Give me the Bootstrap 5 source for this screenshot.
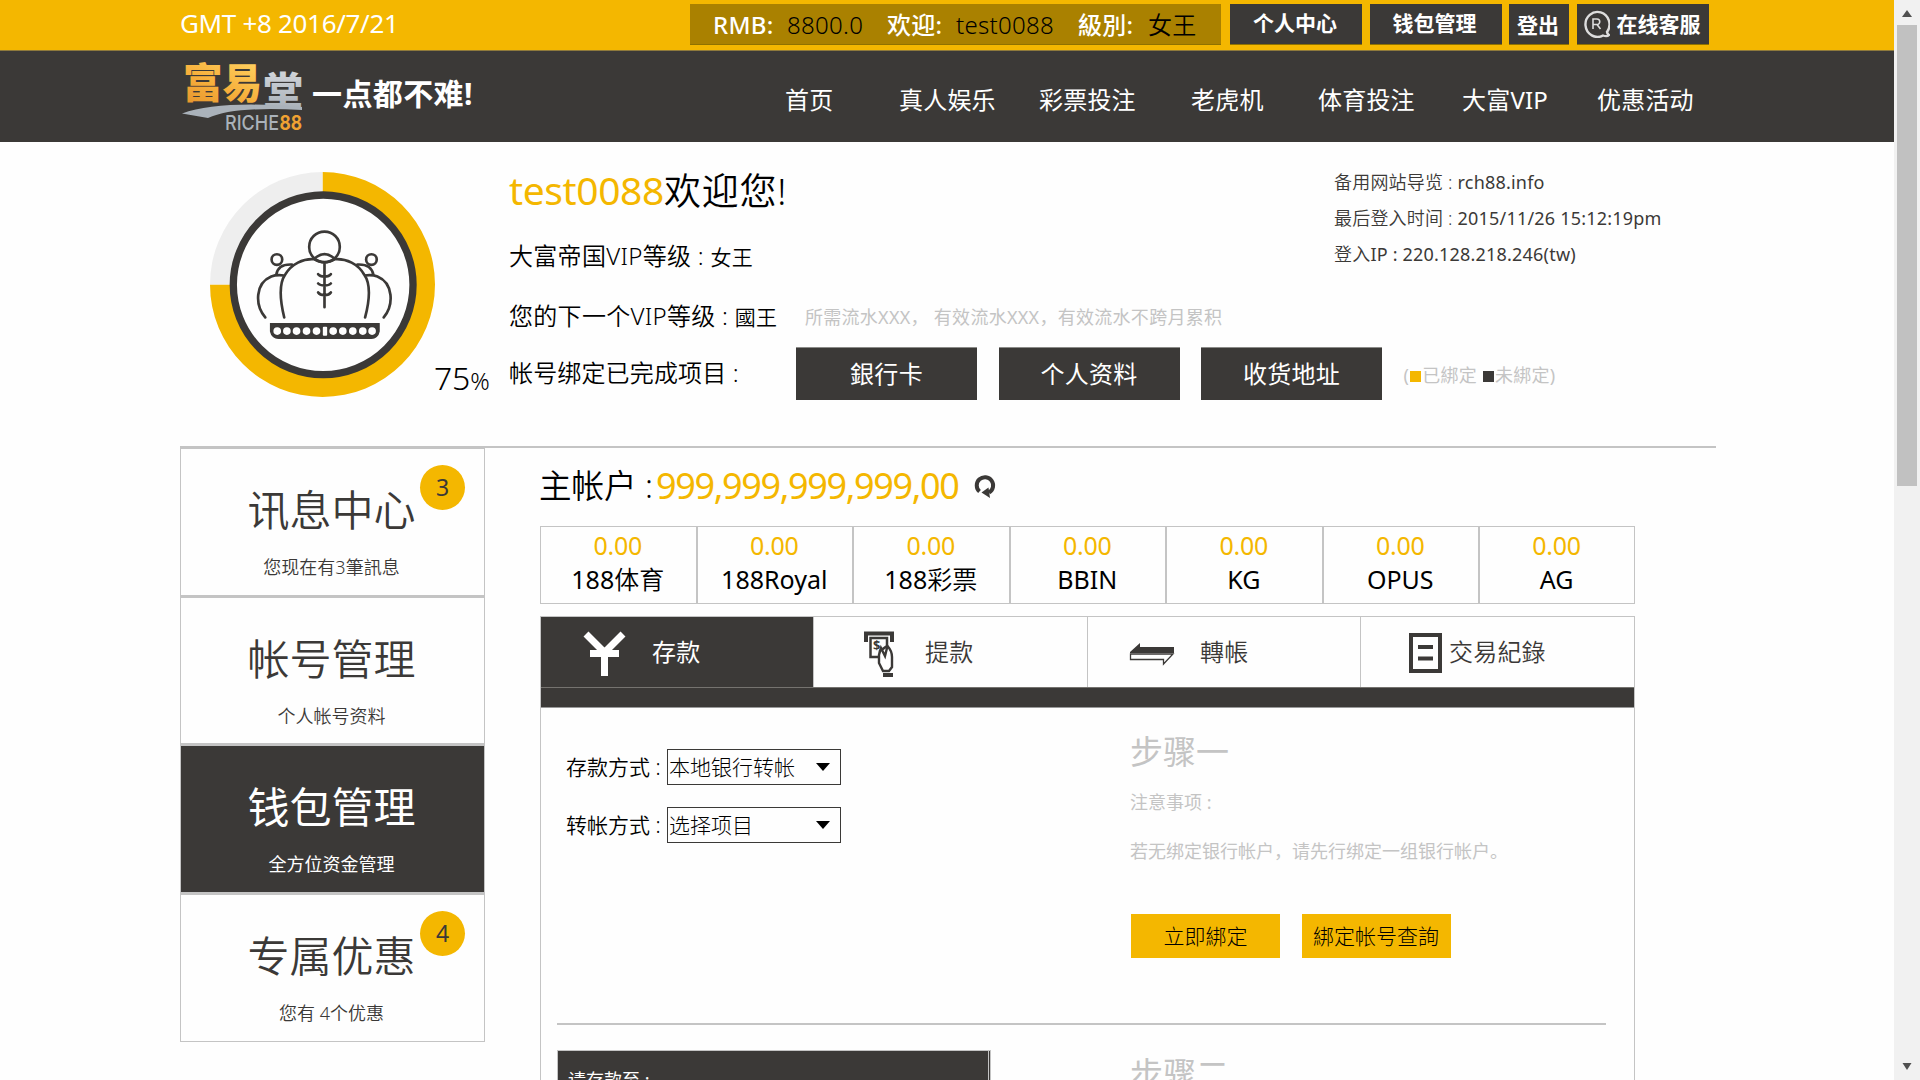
<!DOCTYPE html>
<html lang="zh-CN">
<head>
<meta charset="utf-8">
<title>富易堂 钱包管理</title>
<link href="https://cdn.jsdelivr.net/npm/bootstrap@5.3.0/dist/css/bootstrap.min.css" rel="stylesheet">
<style>
:root{--gold:#f4b700;--ink:#3b3937;--rule:#c4c4c4}
html,body{height:1080px;overflow:hidden}
body{margin:0;background:#fefefe;color:#000;font-family:"Noto Sans","Noto Sans CJK SC",sans-serif;font-size:18px;line-height:1;font-weight:350}
*{white-space:nowrap}
.page{width:1894px;height:1080px;overflow:hidden}
.wrap{width:1536px;margin-left:180px}
.gold{color:var(--gold)}
.topbar{height:51px;background:var(--gold);border-bottom:1px solid #8f7a3c}
.topbar .wrap{padding-top:4px}
.clock{width:510px;height:40px;line-height:39px;font-size:26px;color:#fff;letter-spacing:-.32px;font-weight:400}
.status{width:531px;height:41px;line-height:41px;background:#aa8100;border-bottom:1px solid #8f7200;font-size:24px;letter-spacing:.3px;display:grid;grid-template-columns:74px 100px 69px 122px 70px 1fr;padding-left:23px;margin-right:9px}
.status b{color:#fff;font-weight:500}
.tbtn{height:41px;line-height:39px;background:var(--ink);border-bottom:1px solid #8f7200;color:#fff;font-weight:700;font-size:21px;width:132px;margin-right:7.5px;padding-right:2px;text-align:center;flex-shrink:0}
.tbtn.out{width:60px;line-height:43px}
.tbtn svg{margin-right:7px}
.mainnav{height:91px;background:var(--ink);color:#fff}
.brand{width:605px}
.slogan{font-size:30px;font-weight:700;margin:-5px 0 0 6px;letter-spacing:.4px}
.menu{display:grid;grid-template-columns:114px 140px 152px 127px 144px 135px 1fr;width:930px;font-size:24px;font-weight:400;height:91px;line-height:98px;letter-spacing:.2px}
.profile{height:304px;padding-top:30px}
.ring{width:225px;height:225px;margin-left:30px}
.pct{width:75px;margin:186px 0 0 -1px;font-size:32px;line-height:40px;letter-spacing:-.2px}
.pct span{font-size:24px}
.who{width:824px}
.who .hello{height:44px;line-height:36px;font-size:37px;letter-spacing:.8px}
.who .hello .gold{font-size:39px;letter-spacing:-.4px;font-weight:400}
.line{height:58.5px;line-height:59px;font-size:24px;letter-spacing:.3px}
.line .sm{font-size:21px}
.hint{color:var(--rule);font-size:18px;font-weight:400;margin-top:2px;letter-spacing:.28px}
.bind{width:181px;height:53px;line-height:52px;background:var(--ink);border-top:1px solid #8b8b88;color:#fff;font-size:24px;text-align:center;margin:2.500px 21.5px 0 0;font-weight:400;flex-shrink:0}
.facts{color:var(--ink);font-size:18px;line-height:36px;margin:-8px 0 0 1px;letter-spacing:.2px}
.facts span{font-weight:400}
.sq{display:inline-block;width:11px;height:11px;background:var(--gold);margin:0 1px}
.sq.dk{background:var(--ink)}
.lower{border-top:2px solid var(--rule);height:634px}
.side{width:305px;flex-shrink:0}
.sitem{position:relative;height:148.5px;border:1px solid var(--rule);border-bottom-width:2px;text-align:center;color:var(--ink);padding:36px 2px 0 0}
.sitem:last-child{border-bottom-width:1px}
.sitem .big{font-size:42px;line-height:50px}
.sitem .sub{font-size:18px;line-height:20px;margin-top:22px}
.sitem.on{background:var(--ink);color:#fff}
.sitem.on div{font-weight:400}
.dot{position:absolute;right:19px;top:16px;width:45px;height:45px;border-radius:50%;background:var(--gold);font-size:23px;line-height:44px;font-weight:400}
.content{width:1095px;margin-left:55px}
.acct{height:78px;padding-top:18px;font-size:32.5px;line-height:40px}
.acct .lb1{width:117px;margin-left:-1px}
.acct .gold{font-size:36px;letter-spacing:-1.36px;font-weight:400}
.acct svg{margin:8px 0 0 16px}
.cells{display:grid;grid-template-columns:repeat(6,156.5px) 1fr;height:78px;border:1px solid var(--rule);text-align:center;font-size:25px}
.cells>div{border-right:2px solid var(--rule);padding:1px 1px 0 0;line-height:34px}
.cells>div:last-child{border:0}
.cells .gold{font-weight:400;letter-spacing:-.3px}
.cells .nm{font-size:25px}
.cells .la{font-weight:400}
.tabs4{display:grid;grid-template-columns:273px 274px 273px 1fr;height:71px;border:1px solid var(--rule);border-bottom:0;margin-top:12px;color:var(--ink);font-size:24px;line-height:70px;letter-spacing:.2px}
.tabs4>div{border-right:1.5px solid var(--rule);height:70px}
.tabs4>div:last-child{border:0}
.tabs4 .on{background:var(--ink);color:#fff;font-weight:400}
.panel{border:1px solid var(--rule);border-top:0;height:400px}
.band{height:21px;background:var(--ink);border-top:1px solid #75736f;border-bottom:1px solid #999}
.step{height:317px;border-bottom:2px solid var(--rule);margin:0 28px 0 16px}
.frm{width:573px;padding:41px 0 0 9px}
.frow{height:36px;margin-bottom:22px;font-size:21px}
.frow .lb{width:101px}
.pick{width:174px;height:36px;border:1.5px solid var(--ink);padding:0 10px 0 1px;line-height:34px;font-weight:300}
.note{color:var(--rule);font-weight:400;padding-top:26px}
.note h3{font-size:33px;line-height:36px;margin:0;font-weight:400}
.ybtn{width:149px;height:44px;line-height:44px;background:var(--gold);color:#000;text-align:center;font-size:21px;margin-right:21.5px;font-weight:300}
.paybox{width:434px;height:60px;border:1px solid var(--rule);border-right:3px double var(--rule);background:var(--ink);color:#fff;padding:20px 10px;font-size:18px;font-weight:400}
.sbar{width:26px;height:1080px;background:#f1f1f1}
.thumb{width:20px;height:461px;background:#c1c1c1;margin:0 auto}
</style>
<script src="https://cdn.jsdelivr.net/npm/bootstrap@5.3.0/dist/js/bootstrap.bundle.min.js"></script>
</head>
<body class="d-flex">
<div class="page">
  <header class="topbar"><div class="wrap d-flex">
    <div class="clock">GMT +8 2016/7/21</div>
    <div class="status"><b>RMB:</b><span>8800.0</span><b>欢迎:</b><span>test0088</span><b>級別:</b><span>女王</span></div>
    <div class="tbtn">个人中心</div><div class="tbtn">钱包管理</div><div class="tbtn out">登出</div>
    <div class="tbtn d-flex align-items-center justify-content-center"><svg width="27" height="28" viewBox="0 0 27 28" fill="none" stroke="#ddd" stroke-width="2.400"><path d="M24 22A12 12.500 0 1 0 20 25.500Q24 27 26 25Q24 24 24 21" /><path d="M10 19V9h4a2.700 2.700 0 0 1 0 5.500h-4m4 0 3.500 4.500" stroke-width="1.600"/></svg><span>在线客服</span></div>
  </div></header>
  <nav class="mainnav"><div class="wrap d-flex">
    <div class="brand d-flex align-items-center">
      <svg width="126" height="91" viewBox="0 0 126 91">
        <defs><linearGradient id="lg" x1="0" y1="1" x2=".6" y2="0"><stop offset="0" stop-color="#e2902a"/><stop offset=".5" stop-color="#f7b03c"/><stop offset="1" stop-color="#ffd160"/></linearGradient>
        <linearGradient id="ls" x1="0" y1="0" x2="0" y2="1"><stop offset="0" stop-color="#dde0e4"/><stop offset="1" stop-color="#a3abb3"/></linearGradient></defs>
        <g font-family="Noto Sans CJK SC" font-weight="900"><text x="3" y="47" font-size="41" fill="url(#lg)" textLength="79" lengthAdjust="spacingAndGlyphs">富易</text><text x="83" y="53" font-size="38" fill="url(#ls)" textLength="40" lengthAdjust="spacingAndGlyphs">堂</text></g>
        <path d="M2 62.500Q40 49 122 56V59Q54 55 28 67Z" fill="#aab2ba"/>
        <g font-family="Inter" font-weight="500" font-size="20"><text x="45" y="79" fill="#aab2ba" textLength="54" lengthAdjust="spacingAndGlyphs">RICHE</text><text x="99.500" y="79" fill="#f0a232" font-weight="700" textLength="22.500" lengthAdjust="spacingAndGlyphs">88</text></g>
      </svg>
      <div class="slogan">一点都不难!</div>
    </div>
    <div class="menu"><span>首页</span><span>真人娱乐</span><span>彩票投注</span><span>老虎机</span><span>体育投注</span><span>大富VIP</span><span>优惠活动</span></div>
  </div></nav>

  <section class="wrap profile d-flex">
    <svg class="ring" viewBox="90 66 676 676" fill="none" stroke="#3b3937" stroke-width="8" stroke-linecap="round">
      <path d="M428 404V66A338 338 0 1 1 90 404Z" fill="#f4b700" stroke="none"/>
      <path d="M428 404H90A338 338 0 0 1 428 66Z" fill="#eee" stroke="none"/>
      <circle cx="430" cy="405" r="270" fill="#fefefe" stroke-width="22"/>
      <circle cx="434" cy="291" r="46"/><circle cx="291" cy="329" r="16"/><circle cx="575" cy="329" r="16"/>
      <path d="M313 503C300 450 298 400 316 374C335 342 370 326 402 328Q420 338 434 338Q448 338 466 328C500 326 535 342 553 374C572 400 570 450 556 503M402 328Q434 298 466 328M434 340V472M415 373Q420 380 434 380Q448 380 453 373M415 401Q420 407 434 407Q448 407 453 401M415 428Q420 436 434 436Q448 436 453 428M256 503C224 465 226 400 274 380Q290 374 312 377M612 503C643 465 641 400 593 380Q577 374 555 377M289 375Q294 342 336 344M581 375Q575 342 533 344"/>
      <path d="M272 522H598V545Q594 565 574 566H297Q276 565 272 545Z" fill="#3b3937" stroke-width="4"/>
      <g fill="#fefefe" stroke="none"><circle cx="292" cy="544" r="11.500"/><circle cx="321" cy="544" r="11.500"/><circle cx="350" cy="544" r="11.500"/><circle cx="380" cy="544" r="11.500"/><circle cx="410" cy="544" r="11.500"/><circle cx="460" cy="544" r="11.500"/><circle cx="489" cy="544" r="11.500"/><circle cx="519" cy="544" r="11.500"/><circle cx="549" cy="544" r="11.500"/><circle cx="577" cy="544" r="11.500"/><rect x="429" y="531" width="13" height="27" rx="3"/></g>
    </svg>
    <div class="pct">75<span>%</span></div>
    <div class="who">
      <div class="hello"><span class="gold">test0088</span><span>欢迎您!</span></div>
      <div class="line" style="margin-top:10px"><span>大富帝国VIP等级 : </span><span class="sm">女王</span></div>
      <div class="line d-flex" style="margin-top:1px"><div style="width:296px"><span>您的下一个VIP等级 : </span><span class="sm">國王</span></div><span class="hint">所需流水XXX， 有效流水XXX，有效流水不跨月累积</span></div>
      <div class="line d-flex"><div class="flex-shrink-0" style="width:287px;letter-spacing:.15px;margin-top:-1px">帐号绑定已完成项目 :</div><div class="bind">銀行卡</div><div class="bind">个人资料</div><div class="bind">收货地址</div><span class="hint">(<i class="sq"></i>已綁定 <i class="sq dk"></i>未綁定)</span></div>
    </div>
    <div class="facts"><div>备用网站导览 : <span>rch88.info</span></div><div>最后登入时间 : <span>2015/11/26 15:12:19pm</span></div><div>登入<span>IP : 220.128.218.246(tw)</span></div></div>
  </section>

  <section class="wrap lower d-flex">
    <aside class="side">
      <div class="sitem"><div class="big">讯息中心</div><div class="sub">您现在有3筆訊息</div><span class="dot">3</span></div>
      <div class="sitem"><div class="big">帐号管理</div><div class="sub">个人帐号资料</div></div>
      <div class="sitem on"><div class="big">钱包管理</div><div class="sub">全方位资金管理</div></div>
      <div class="sitem"><div class="big">专属优惠</div><div class="sub">您有 4个优惠</div><span class="dot">4</span></div>
    </aside>
    <main class="content">
      <div class="acct d-flex"><div class="lb1">主帐户 :</div><span class="gold">999,999,999,999,00</span>
        <svg width="22" height="25" viewBox="0 0 22 25" fill="none" stroke="#3b3937" stroke-width="4"><path d="M5.500 17.500A8.200 8.200 0 1 1 15 18.500"/><path d="M7.500 18.500l7-5 1.500 10.500z" fill="#3b3937" stroke="none"/></svg></div>
      <div class="cells">
        <div><div class="gold">0.00</div><div class="nm"><span class="la">188</span>体育</div></div>
        <div><div class="gold">0.00</div><div class="nm la">188Royal</div></div>
        <div><div class="gold">0.00</div><div class="nm"><span class="la">188</span>彩票</div></div>
        <div><div class="gold">0.00</div><div class="nm la">BBIN</div></div>
        <div><div class="gold">0.00</div><div class="nm la">KG</div></div>
        <div><div class="gold">0.00</div><div class="nm la">OPUS</div></div>
        <div><div class="gold">0.00</div><div class="nm la">AG</div></div>
      </div>
      <div class="tabs4">
        <div class="on d-flex"><svg width="43" height="45" viewBox="0 0 43 45" style="margin:14px 26px 0 42px" fill="none" stroke="#fff" stroke-width="7"><path d="M3 3 21.500 21.500 40 3M7 22.500H36M21.500 21V45"/></svg><span>存款</span></div>
        <div class="d-flex"><svg width="30" height="46" viewBox="0 0 30 46" style="margin:14px 31px 0 50px" fill="none" stroke="#3b3937"><path d="M2 11V2.500H28V11" stroke-width="4"/><path d="M6.500 7V26H16V20L23 15V7Z" stroke-width="2.500"/><text x="9" y="19" font-size="13" font-weight="700" fill="#3b3937" stroke="none">$</text><path d="M17 17 21 25 23.500 15Q28 20 28 26V36L25 40H19L15 32V24Z" fill="#fff" stroke-width="2.400"/><path d="M19 44H29" stroke-width="4"/></svg><span>提款</span></div>
        <div class="d-flex"><svg width="46" height="25" viewBox="0 0 46 25" style="margin:25px 25px 0 41px"><path d="M1 10 11 1V5H45V11H1Z" fill="#3b3937"/><path d="M1.500 12H44L34.500 22V17.500H1.500Z" fill="#fff" stroke="#3b3937" stroke-width="1.300"/></svg><span>轉帳</span></div>
        <div class="d-flex"><svg width="33" height="40" viewBox="0 0 33 40" style="margin:16px 7px 0 48px" fill="none" stroke="#3b3937" stroke-width="4"><path d="M2 2H31V38H2ZM9 14H24M9 25.500H24"/></svg><span>交易紀錄</span></div>
      </div>
      <div class="panel">
        <div class="band"></div>
        <div class="step d-flex">
          <div class="frm">
            <div class="frow d-flex align-items-center"><span class="lb">存款方式 :</span><div class="pick d-flex align-items-center"><span class="me-auto">本地银行转帐</span><svg width="14" height="8"><path d="M0 0H14L7 8Z"/></svg></div></div>
            <div class="frow d-flex align-items-center"><span class="lb">转帐方式 :</span><div class="pick d-flex align-items-center"><span class="me-auto">选择项目</span><svg width="14" height="8"><path d="M0 0H14L7 8Z"/></svg></div></div>
          </div>
          <div class="note"><h3>步骤一</h3><div style="margin-top:23px">注意事项 :</div><div style="margin-top:31px">若无绑定银行帐户，请先行绑定一组银行帐户。</div>
            <div class="d-flex" style="margin:54px 0 0 1px"><div class="ybtn">立即綁定</div><div class="ybtn">綁定帐号查詢</div></div></div>
        </div>
        <div class="d-flex" style="padding:25px 0 0 16px"><div class="paybox">请存款至 :</div><div class="note" style="padding:9px 0 0 139px"><h3 style="line-height:30px">步骤二</h3></div></div>
      </div>
    </main>
  </section>
</div>
<div class="sbar"><svg class="d-block" width="26" height="25"><path d="M13 10 18 17H8Z" fill="#505050"/></svg><div class="thumb"></div><svg class="d-block" width="26" height="25" style="margin-top:569px"><path d="M13 15 17.500 8H8.500Z" fill="#505050"/></svg></div>
</body>
</html>
